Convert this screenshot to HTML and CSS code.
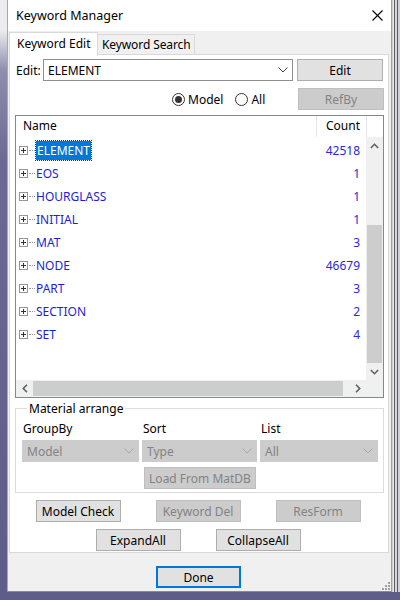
FILE: index.html
```html
<!DOCTYPE html>
<html>
<head>
<meta charset="utf-8">
<link rel="stylesheet" href="styles.css">
</head>
<body>
<div class="window">
  <div class="titlebar">
    <span class="title">Keyword Manager</span>
    <svg class="close" width="11" height="11" viewBox="0 0 11 11"><path d="M0.5 0.5 L10.5 10.5 M10.5 0.5 L0.5 10.5" stroke="#000" stroke-width="1.1" fill="none"/></svg>
  </div>
  <div class="tabs">
    <div class="tab active">Keyword Edit</div>
    <div class="tab">Keyword Search</div>
  </div>
  <div class="panel">
    <div class="edit-row">
      <span class="edit-label">Edit:</span>
      <div class="combo">
        <span class="combo-text">ELEMENT</span>
        <svg class="chev" width="10" height="6" viewBox="0 0 10 6"><polyline points="0.5,0.5 5,5 9.5,0.5" fill="none" stroke="#404040" stroke-width="1"/></svg>
      </div>
      <div class="btn edit-btn">Edit</div>
    </div>
    <div class="radio-row">
      <span class="radio checked"></span><span class="radio-text">Model</span>
      <span class="radio all"></span><span class="radio-text">All</span>
      <div class="btn disabled refby">RefBy</div>
    </div>
    <div class="listview">
      <div class="lv-header">
        <div class="h-name">Name</div>
        <div class="h-count">Count</div>
        <div class="h-rest"></div>
      </div>
      <div class="lv-middle">
        <div class="lv-body">
          <div class="lv-row"><span class="exp"></span><span class="dots"></span><span class="name sel">ELEMENT</span><span class="count">42518</span></div>
          <div class="lv-row"><span class="exp"></span><span class="dots"></span><span class="name">EOS</span><span class="count">1</span></div>
          <div class="lv-row"><span class="exp"></span><span class="dots"></span><span class="name">HOURGLASS</span><span class="count">1</span></div>
          <div class="lv-row"><span class="exp"></span><span class="dots"></span><span class="name">INITIAL</span><span class="count">1</span></div>
          <div class="lv-row"><span class="exp"></span><span class="dots"></span><span class="name">MAT</span><span class="count">3</span></div>
          <div class="lv-row"><span class="exp"></span><span class="dots"></span><span class="name">NODE</span><span class="count">46679</span></div>
          <div class="lv-row"><span class="exp"></span><span class="dots"></span><span class="name">PART</span><span class="count">3</span></div>
          <div class="lv-row"><span class="exp"></span><span class="dots"></span><span class="name">SECTION</span><span class="count">2</span></div>
          <div class="lv-row"><span class="exp"></span><span class="dots"></span><span class="name">SET</span><span class="count">4</span></div>
        </div>
        <div class="vscroll">
          <div class="sb-arrow"><svg width="9" height="6" viewBox="0 0 9 6"><polyline points="0.8,5 4.5,1.3 8.2,5" fill="none" stroke="#606060" stroke-width="1.6"/></svg></div>
          <div class="vs-space1"></div>
          <div class="vs-thumb"></div>
          <div class="vs-space2"></div>
          <div class="sb-arrow"><svg width="9" height="6" viewBox="0 0 9 6"><polyline points="0.8,1 4.5,4.7 8.2,1" fill="none" stroke="#606060" stroke-width="1.6"/></svg></div>
        </div>
      </div>
      <div class="lv-bottom">
        <div class="hscroll">
          <div class="sb-arrow h"><svg width="6" height="9" viewBox="0 0 6 9"><polyline points="5,0.8 1.3,4.5 5,8.2" fill="none" stroke="#606060" stroke-width="1.6"/></svg></div>
          <div class="hs-thumb"></div>
          <div class="hs-space"></div>
          <div class="sb-arrow h"><svg width="6" height="9" viewBox="0 0 6 9"><polyline points="1,0.8 4.7,4.5 1,8.2" fill="none" stroke="#606060" stroke-width="1.6"/></svg></div>
        </div>
        <div class="corner"></div>
      </div>
    </div>
    <fieldset class="group">
      <legend>Material arrange</legend>
      <div class="grp-grid">
        <span class="grp-label">GroupBy</span>
        <span class="grp-label">Sort</span>
        <span class="grp-label">List</span>
        <div class="combo disabled"><span class="combo-text">Model</span><svg class="chev" width="10" height="6" viewBox="0 0 10 6"><polyline points="0.5,0.5 5,5 9.5,0.5" fill="none" stroke="#a8a8a8" stroke-width="1"/></svg></div>
        <div class="combo disabled"><span class="combo-text">Type</span><svg class="chev" width="10" height="6" viewBox="0 0 10 6"><polyline points="0.5,0.5 5,5 9.5,0.5" fill="none" stroke="#a8a8a8" stroke-width="1"/></svg></div>
        <div class="combo disabled"><span class="combo-text">All</span><svg class="chev" width="10" height="6" viewBox="0 0 10 6"><polyline points="0.5,0.5 5,5 9.5,0.5" fill="none" stroke="#a8a8a8" stroke-width="1"/></svg></div>
      </div>
      <div class="load-row"><div class="btn disabled load">Load From MatDB</div></div>
    </fieldset>
    <div class="btn-row first">
      <div class="btn">Model Check</div>
      <div class="btn disabled">Keyword Del</div>
      <div class="btn disabled">ResForm</div>
    </div>
    <div class="btn-row second">
      <div class="btn">ExpandAll</div>
      <div class="btn">CollapseAll</div>
    </div>
  </div>
  <div class="footer">
    <div class="btn done">Done</div>
    <svg class="grip" width="8" height="8" viewBox="0 0 8 8"><g fill="#a0a0a0"><rect x="6" y="0" width="2" height="2"/><rect x="3" y="3" width="2" height="2"/><rect x="6" y="3" width="2" height="2"/><rect x="0" y="6" width="2" height="2"/><rect x="3" y="6" width="2" height="2"/><rect x="6" y="6" width="2" height="2"/></g></svg>
  </div>
</div>
</body>
</html>
```
FILE: styles.css
```css
* { box-sizing: border-box; }
html, body { margin: 0; padding: 0; }
body {
  width: 400px;
  height: 600px;
  overflow: hidden;
  font-family: "Noto Sans", "Liberation Sans", sans-serif;
  font-size: 12px;
  color: #000;
  background: linear-gradient(to bottom, #ececf0 0, #ececf0 30px, #8f8eae 70px, #6c6a94 160px, #5e5c88 100%);
}
.window {
  margin-left: 7px;
  width: 385px;
  height: 592px;
  background: #f0f0f0;
  border-left: 1px solid #a8a8a8;
  border-right: 1px solid #a0a0a0;
  border-bottom: 1px solid #8a8a8a;
  display: flex;
  flex-direction: column;
  position: relative;
  box-shadow: 1px 0 0 #d0d0d0, 2px 0 0 #e8e8e8, 3px 0 0 #5c5c5c, 4px 0 0 #d8d8d8, 5px 0 0 #d8d8d8, 6px 0 0 #5a5a5a, 7px 0 0 #cfcfd6, 8px 0 0 #cfcfd6;
}
.titlebar {
  height: 31px;
  background: #fff;
  display: flex;
  align-items: center;
  padding-left: 8px;
  padding-right: 8px;
}
.title { font-size: 12.5px; }
.close { margin-left: auto; }

.tabs {
  height: 24px;
  display: flex;
  align-items: flex-start;
  padding-left: 1px;
  position: relative;
  z-index: 2;
  margin-bottom: -1px;
}
.tab {
  height: 20px;
  margin-top: 3px;
  padding: 0 3px 0 4px;
  border: 1px solid #d9d9d9;
  border-bottom: none;
  border-left: none;
  background: #f0f0f0;
  line-height: 19px;
  white-space: nowrap;
  letter-spacing: -0.1px;
}
.tab.active {
  margin-top: 1px;
  height: 24px;
  width: 89px;
  background: #fff;
  border-left: 1px solid #d9d9d9;
  padding: 0 0 0 7px;
  line-height: 21px;
  letter-spacing: 0;
}

.panel {
  margin-left: 1px;
  width: 380px;
  height: 499px;
  background: #fff;
  border: 1px solid #d9d9d9;
  padding: 4px 4px 0 6px;
  display: flex;
  flex-direction: column;
}
.edit-row {
  display: flex;
  align-items: center;
  height: 22px;
}
.edit-label { width: 27px; }
.combo {
  height: 22px;
  border: 1px solid #8f8f8f;
  background: #fff;
  display: flex;
  align-items: center;
  padding: 0 4px;
}
.edit-row .combo { width: 250px; }
.combo-text { flex: 1; white-space: nowrap; }
.chev { flex: none; margin-right: 0; }
.btn {
  height: 22px;
  border: 1px solid #adadad;
  background: #e1e1e1;
  display: flex;
  align-items: center;
  justify-content: center;
  white-space: nowrap;
}
.btn.disabled {
  background: #cccccc;
  border-color: #bfbfbf;
  color: #838383;
}
.edit-btn { width: 86px; margin-left: 4px; }

.radio-row {
  display: flex;
  align-items: center;
  height: 22px;
  margin-top: 7px;
  padding-left: 156px;
}
.radio {
  width: 13px;
  height: 13px;
  border: 1px solid #333;
  border-radius: 50%;
  background: #fff;
  position: relative;
}
.radio.checked::after {
  content: "";
  position: absolute;
  left: 2px;
  top: 2px;
  width: 7px;
  height: 7px;
  border-radius: 50%;
  background: #333;
}
.radio-text { margin-left: 3px; }
.radio.all { margin-left: 12px; }
.refby { width: 86px; margin-left: auto; }

.listview {
  margin: 5px 0 0 -1px;
  width: 369px;
  height: 283px;
  border: 1px solid #828790;
  display: flex;
  flex-direction: column;
  background: #fff;
}
.lv-header {
  height: 21px;
  display: flex;
  flex: none;
}
.h-name { width: 301px; padding-left: 7px; line-height: 20px; border-right: 1px solid #e5e5e5; }
.h-count { width: 50px; text-align: right; padding-right: 6px; line-height: 20px; border-right: 1px solid #e5e5e5; }
.h-rest { flex: 1; }
.lv-middle { flex: 1; display: flex; min-height: 0; }
.lv-body { flex: 1; padding-top: 2px; }
.lv-row {
  height: 23px;
  display: flex;
  align-items: center;
  padding-left: 3px;
  color: #1e1ed2;
}
.exp {
  width: 9px;
  height: 9px;
  border: 1px solid #959595;
  position: relative;
  background: #fff;
}
.exp::before {
  content: "";
  position: absolute;
  left: 1px; top: 3px;
  width: 5px; height: 1px;
  background: #333;
}
.exp::after {
  content: "";
  position: absolute;
  left: 3px; top: 1px;
  width: 1px; height: 5px;
  background: #333;
}
.dots {
  width: 6px;
  border-top: 1px dotted #9a9a9a;
  margin-left: 1px;
}
.name {
  margin-left: 1px;
  flex: 1;
  white-space: nowrap;
}
.name.sel {
  flex: none;
  background: #0078d7;
  color: #fff;
  outline: 1px dotted #333;
  height: 19px;
  line-height: 19px;
  padding: 0 1px;
}
.lv-row:first-child .name.sel + .count { margin-left: auto; }
.count {
  width: 50px;
  text-align: right;
  padding-right: 6px;
  color: #2a2ad8;
}
.vscroll {
  width: 17px;
  background: #f0f0f0;
  display: flex;
  flex-direction: column;
}
.sb-arrow {
  height: 17px;
  flex: none;
  display: flex;
  align-items: center;
  justify-content: center;
}
.sb-arrow.h { width: 17px; height: 17px; }
.vs-space1 { height: 71px; flex: none; }
.vs-thumb { height: 138px; margin: 0 1px; background: #cdcdcd; flex: none; }
.vs-space2 { flex: 1; }
.lv-bottom { height: 17px; display: flex; flex: none; }
.hscroll { flex: 1; display: flex; background: #f0f0f0; }
.hs-thumb { width: 310px; margin: 1px 0; background: #cdcdcd; }
.hs-space { flex: 1; }
.corner { width: 17px; background: #f0f0f0; }

.group {
  margin: 3px 0 0 -1px;
  width: 369px;
  border: 1px solid #dcdcdc;
  padding: 0 0 3px 6px;
  min-width: 0;
}
.group legend {
  padding: 0 2px;
  margin-left: 5px;
  line-height: 15px;
}
.grp-grid {
  display: grid;
  grid-template-columns: 117px 115px 118px;
  column-gap: 3px;
  margin-top: 5px;
}
.grp-label { line-height: 16px; padding-left: 1px; margin-bottom: 3px; }
.combo.disabled {
  background: #cccccc;
  border-color: #cccccc;
  color: #838383;
}
.load-row { margin-top: 5px; padding-left: 122px; }
.load { width: 112px; }

.btn-row {
  display: flex;
  justify-content: center;
  gap: 35px;
  padding-right: 4px;
}
.btn-row .btn { width: 85px; }
.btn-row.first { margin-top: 7px; }
.btn-row.second { margin-top: 7px; }

.footer {
  flex: 1;
  display: flex;
  justify-content: center;
  position: relative;
  padding-top: 13px;
}
.done {
  width: 85px;
  border: 2px solid #0078d7;
  margin-left: -2px;
}
.grip { position: absolute; right: 1px; bottom: 1px; }
```
